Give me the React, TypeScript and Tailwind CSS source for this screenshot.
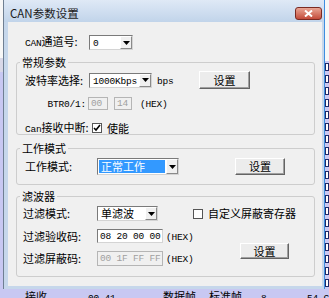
import type { ReactNode } from 'react';

// latin text in the dialog is a narrow courier-like face
function L({ children }: { children: ReactNode }) {
  return (
    <span className="whitespace-nowrap font-['Liberation_Mono',monospace] text-[9.5px] tracking-[-0.2px]">
      {children}
    </span>
  );
}

function Arrow() {
  return (
    <span className="flex h-full w-[12px] shrink-0 items-center justify-center border border-t-white border-l-white border-r-[#8a8a8a] border-b-[#8a8a8a] bg-[#f0f0f0]">
      <svg width="7" height="4" viewBox="0 0 7 4">
        <path d="M0 0h7L3.5 4z" fill="#000" />
      </svg>
    </span>
  );
}

function Combo({ w, h, children, active }: { w: string; h: string; children: ReactNode; active?: boolean }) {
  return (
    <div className={`${w} ${h} flex shrink-0 border border-[#7a7a7a] border-b-[#d4d4d4] border-r-[#d4d4d4] bg-white`}>
      <div className="flex min-w-0 flex-1 items-center p-[1px]">
        {active ? (
          <span className="flex h-full w-full items-center bg-[#3399ff] pl-[2px] text-white">{children}</span>
        ) : (
          <span className="pl-[2px]">{children}</span>
        )}
      </div>
      <Arrow />
    </div>
  );
}

function Btn({ w, h }: { w: string; h: string }) {
  return (
    <div
      className={`${w} ${h} flex shrink-0 items-center justify-center border border-t-white border-l-white border-r-[#646464] border-b-[#646464] bg-[#ececec] shadow-[inset_-1px_-1px_0_#a0a0a0]`}
    >
      设置
    </div>
  );
}

function Field({ w, h, text, disabled }: { w: string; h: string; text: string; disabled?: boolean }) {
  return (
    <div
      className={`${w} ${h} flex shrink-0 items-center overflow-hidden border pl-[2px] ${
        disabled
          ? 'border-[#b5b5b5] bg-[#f0f0f0] text-[#a0a0a0]'
          : 'border-[#7a7a7a] border-b-[#d4d4d4] border-r-[#d4d4d4] bg-white'
      }`}
    >
      <L>{text}</L>
    </div>
  );
}

function Check({ on }: { on?: boolean }) {
  return (
    <span className="flex h-[10px] w-[10px] shrink-0 items-center justify-center border border-[#555] bg-white">
      {on && (
        <svg width="8" height="8" viewBox="0 0 8 8">
          <path d="M1 4l2 2 4-5" stroke="#000" strokeWidth="1.6" fill="none" />
        </svg>
      )}
    </span>
  );
}

function Group({ title, cls, children }: { title: string; cls: string; children: ReactNode }) {
  return (
    <fieldset className={`${cls} ml-[8px] w-[299px] rounded-[3px] border border-[#cdcdcd]`}>
      <legend className="ml-[3px] h-[14px] px-[2px] leading-[14px]">{title}</legend>
      {children}
    </fieldset>
  );
}

export default function App() {
  const bgRows = Array.from({ length: 19 });

  return (
    <div className="flex h-[298px] w-[329px] flex-col overflow-hidden bg-[#c8c8f2] font-['Noto_Sans_CJK_SC',sans-serif] text-[11px] leading-[13px] text-black">
      <div className="flex h-[289px] shrink-0">
        {/* list behind the dialog, left side */}
        <div className="flex w-[3px] flex-col">
          <div className="h-[58px] bg-[#f7f7f7]" />
          <div className="h-[14px] bg-[#d8d8e8]" />
          <div className="flex-1 bg-[#c8c8f2]" />
        </div>

        {/* dialog */}
        <div className="flex w-[321px] flex-col border-l border-[#6f7f92]">
          <div className="flex h-[22px] items-start justify-between bg-gradient-to-b from-[#dfe9f6] to-[#c1d4ea] pl-[6px] pr-[2px]">
            <span className="pt-[5px] text-[11.5px] leading-[16px] text-[#1b1b1b]">CAN参数设置</span>
            <div className="mt-[7px] flex h-[13px] w-[27px] items-center justify-center rounded-[3px] border border-[#7a2a22] bg-gradient-to-b from-[#e8a595] to-[#c24a3a]">
              <svg width="9" height="7" viewBox="0 0 9 7">
                <path d="M1 0.5l7 6M8 0.5l-7 6" stroke="#fff" strokeWidth="2" />
              </svg>
            </div>
          </div>

          <div className="flex h-[264px]">
            <div className="w-[4px] bg-[#c6d7eb]" />
            <div className="flex w-[314px] flex-col bg-[#f0f0f0]">
              <div className="mt-[13px] flex h-[15px] items-center pl-[17px]">
                <span className="w-[64px]">
                  <L>CAN</L>通道号:
                </span>
                <Combo w="w-[44px]" h="h-[15px]">
                  <L>0</L>
                </Combo>
              </div>

              <Group title="常规参数" cls="mt-[5px] h-[80px]">
                <div className="mt-[2px] flex h-[18px] items-center pl-[8px]">
                  <span className="w-[64px]">波特率选择:</span>
                  <Combo w="w-[63px]" h="h-[15px]">
                    <L>1000Kbps</L>
                  </Combo>
                  <span className="w-[47px] pl-[5px]">
                    <L>bps</L>
                  </span>
                  <Btn w="w-[51px]" h="h-[18px]" />
                </div>
                <div className="mt-[8px] flex h-[13px] items-center pl-[8px]">
                  <span className="w-[63px] pr-[2px] text-right">
                    <L>BTR0/1:</L>
                  </span>
                  <Field w="w-[20px]" h="h-[13px]" text="00" disabled />
                  <span className="w-[6px]" />
                  <Field w="w-[18px]" h="h-[13px]" text="14" disabled />
                  <span className="pl-[8px]">
                    <L>(HEX)</L>
                  </span>
                </div>
                <div className="mt-[11px] flex h-[14px] items-center pl-[8px]">
                  <span className="w-[67px]">
                    <L>Can</L>接收中断:
                  </span>
                  <Check on />
                  <span className="pl-[5px]">使能</span>
                </div>
              </Group>

              <Group title="工作模式" cls="mt-[6px] h-[44px]">
                <div className="mt-[3px] flex h-[17px] items-center pl-[8px]">
                  <span className="w-[72px]">工作模式:</span>
                  <Combo w="w-[82px]" h="h-[17px]" active>
                    正常工作
                  </Combo>
                  <span className="w-[56px]" />
                  <Btn w="w-[50px]" h="h-[17px]" />
                </div>
              </Group>

              <Group title="滤波器" cls="mt-[4px] h-[88px]">
                <div className="mt-[3px] flex h-[15px] items-center pl-[6px]">
                  <span className="w-[74px]">过滤模式:</span>
                  <Combo w="w-[61px]" h="h-[15px]">
                    单滤波
                  </Combo>
                  <span className="w-[35px]" />
                  <Check />
                  <span className="pl-[5px]">自定义屏蔽寄存器</span>
                </div>
                <div className="mt-[8px] flex pl-[6px]">
                  <div className="flex w-[217px] flex-col">
                    <div className="flex h-[14px] items-center">
                      <span className="w-[74px]">过滤验收码:</span>
                      <Field w="w-[66px]" h="h-[14px]" text="08 20 00 00" />
                      <span className="pl-[3px]">
                        <L>(HEX)</L>
                      </span>
                    </div>
                    <div className="mt-[8px] flex h-[15px] items-center">
                      <span className="w-[74px]">过滤屏蔽码:</span>
                      <Field w="w-[66px]" h="h-[15px]" text="00 1F FF FF" disabled />
                      <span className="pl-[3px]">
                        <L>(HEX)</L>
                      </span>
                    </div>
                  </div>
                  <div className="mt-[14px]">
                    <Btn w="w-[49px]" h="h-[16px]" />
                  </div>
                </div>
              </Group>
            </div>
            <div className="w-[2px] bg-[#c6d7eb]" />
          </div>
          <div className="h-[3px] bg-[#c6d7eb]" />
        </div>

        {/* list behind the dialog, right side */}
        <div className="flex w-[5px]">
          <div className="w-[1px] bg-[#3d8ee0]" />
          <div className="flex flex-1 flex-col">
            <div className="h-[62px] bg-[#f7f7f7]" />
            {bgRows.map((_, i) => (
              <div key={i} className="flex h-[12px] shrink-0 items-center bg-[#c8c8f2]">
                <span className="h-[8px] w-[4px] border border-[#1e2a6a] bg-white" />
              </div>
            ))}
          </div>
        </div>
      </div>

      {/* last row of the list below the dialog, cut by the window edge */}
      <div className="flex h-[9px] items-start overflow-hidden pt-[1px]">
        <span className="w-[88px] pl-[25px]">接收</span>
        <span className="w-[75px]">
          <L>00 41</L>
        </span>
        <span className="w-[46px]">数据帧</span>
        <span className="w-[52px]">标准帧</span>
        <span className="w-[46px]">
          <L>8</L>
        </span>
        <span>
          <L>54 C</L>
        </span>
      </div>
    </div>
  );
}
